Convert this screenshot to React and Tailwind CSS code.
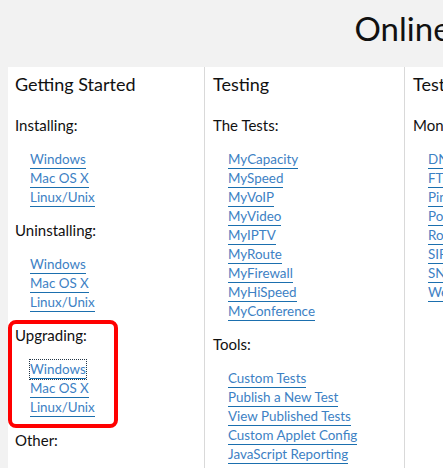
import React from 'react'

const COLUMNS = [
  {
    title: 'Getting Started',
    groups: [
      { label: 'Installing:', links: ['Windows', 'Mac OS X', 'Linux/Unix'] },
      { label: 'Uninstalling:', links: ['Windows', 'Mac OS X', 'Linux/Unix'] },
      { label: 'Upgrading:', links: ['Windows', 'Mac OS X', 'Linux/Unix'], focused: 0 },
      { label: 'Other:', links: ['Release Notes', 'System Requirements'] },
    ],
  },
  {
    title: 'Testing',
    groups: [
      {
        label: 'The Tests:',
        links: ['MyCapacity', 'MySpeed', 'MyVoIP', 'MyVideo', 'MyIPTV', 'MyRoute', 'MyFirewall', 'MyHiSpeed', 'MyConference'],
      },
      {
        label: 'Tools:',
        links: ['Custom Tests', 'Publish a New Test', 'View Published Tests', 'Custom Applet Config', 'JavaScript Reporting', 'Language Applet Test'],
      },
    ],
  },
  {
    title: 'Test Services',
    groups: [
      { label: 'Monitoring:', links: ['DNS', 'FTP', 'Ping', 'Port', 'Route', 'SIP', 'SNMP', 'Web'] },
    ],
  },
  {
    title: 'Reporting',
    groups: [{ label: 'Results:', links: ['Overview', 'Export'] }],
  },
]

function Column({ col, first }) {
  return (
    <div className={`shrink-0 pb-10 ${first ? 'w-[196px] pl-[7px]' : 'w-[200px] border-l border-[#d9d9d9] pl-[8px]'}`}>
      <h2 className="pt-[5px] text-[18px] leading-[24px] text-[#111]">{col.title}</h2>
      {col.groups.map((g, gi) => (
        <div key={gi}>
          <div className={`${gi === 0 ? 'mt-[19px]' : 'mt-[17px]'} text-[15px] leading-[20px] text-[#111]`}>{g.label}</div>
          <ul className="mt-[11px] pl-[15px]">
            {g.links.map((l, li) => (
              <li key={li} className="h-[19px]">
                <a
                  href="#"
                  className={`inline-block text-[13.4px] leading-[18px] text-[#3d81c4] border-b border-[#1b6fae] ${g.focused === li ? 'outline outline-1 outline-dotted outline-[#234]' : ''}`}
                >
                  {l}
                </a>
              </li>
            ))}
          </ul>
        </div>
      ))}
    </div>
  )
}

export default function App() {
  return (
    <div className="min-h-screen bg-[#f2f2f2] overflow-hidden" style={{ fontFamily: 'Lato, "Open Sans", sans-serif' }}>
      <div className="relative w-[1036px]">
        <h1 className="pt-[8px] h-[67px] text-center text-[33px] leading-[40px] text-[#111]">Online Support Center</h1>
        <div className="mx-2 flex bg-white">
          {COLUMNS.map((c, i) => (
            <Column key={i} col={c} first={i === 0} />
          ))}
        </div>
        {/* highlight around the upgrading section */}
        <div className="absolute left-[8px] top-[320px] w-[110px] h-[108px] rounded-[8px] border-[4px] border-[#f00]" />
      </div>
    </div>
  )
}
